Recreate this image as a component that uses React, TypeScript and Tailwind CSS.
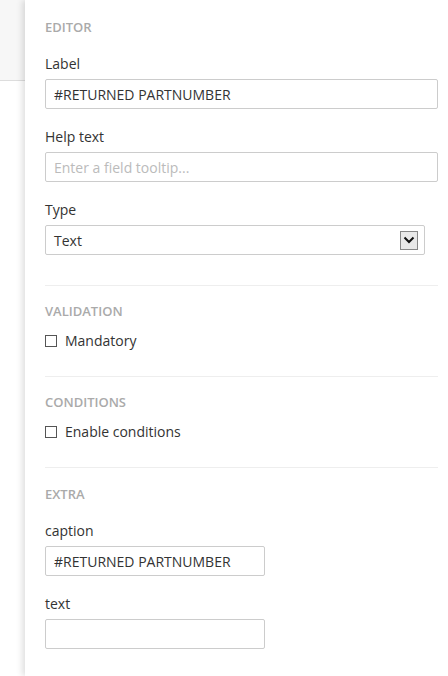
import type { ReactNode } from 'react'

function SectionTitle({ children }: { children: ReactNode }) {
  return <div className="text-[13px] font-semibold uppercase leading-4 text-[#aaaaaa]">{children}</div>
}

function FieldLabel({ children }: { children: ReactNode }) {
  return <div className="mb-[5px] text-[14px] leading-5 text-[#333333]">{children}</div>
}

function TextInput({ value, placeholder, className }: { value?: string; placeholder?: string; className?: string }) {
  return (
    <input
      type="text"
      defaultValue={value}
      placeholder={placeholder}
      className={
        'block h-[30px] rounded-[2px] border border-[#cccccc] bg-white px-[8px] text-[14px] text-[#333333] outline-none placeholder:text-[#bbbbbb] ' +
        (className ?? 'w-full')
      }
    />
  )
}

function Check({ label }: { label: string }) {
  return (
    <label className="flex items-center gap-[8px] text-[14px] leading-5 text-[#333333]">
      <span className="block size-[12px] border border-[#555555] bg-white" />
      {label}
    </label>
  )
}

export default function App() {
  return (
    <div className="flex min-h-[676px] bg-white font-['Open_Sans',sans-serif]">
      <div className="w-[25px] shrink-0">
        <div className="h-[81px] border-b border-[#dddddd] bg-[#f7f7f7]" />
      </div>
      <div className="relative flex-1 bg-white pb-6 pl-[20px] pr-[10px] pt-[19px] shadow-[-3px_0_6px_rgba(0,0,0,0.12)]">
        <SectionTitle>Editor</SectionTitle>
        <div className="mt-[19px]">
          <FieldLabel>Label</FieldLabel>
          <TextInput value="#RETURNED PARTNUMBER" />
        </div>
        <div className="mt-[18px]">
          <FieldLabel>Help text</FieldLabel>
          <TextInput placeholder="Enter a field tooltip..." />
        </div>
        <div className="mt-[18px]">
          <FieldLabel>Type</FieldLabel>
          <div className="flex h-[30px] w-[380px] items-center justify-between rounded-[2px] border border-[#cccccc] bg-white pl-[8px] pr-[6px] text-[14px] text-[#333333]">
            <span>Text</span>
            <span className="flex h-[19px] w-[18px] items-center justify-center border border-[#888888] bg-[#e9e9e9]">
              <svg width="12" height="8" viewBox="0 0 12 8" fill="none">
                <path d="M1.5 1.5 6 6l4.5-4.5" stroke="#111" strokeWidth="2" />
              </svg>
            </span>
          </div>
        </div>

        <div className="mt-[30px] border-t border-[#eeeeee]" />
        <div className="mt-[17px]">
          <SectionTitle>Validation</SectionTitle>
        </div>
        <div className="mt-[12px]">
          <Check label="Mandatory" />
        </div>

        <div className="mt-[25px] border-t border-[#eeeeee]" />
        <div className="mt-[17px]">
          <SectionTitle>Conditions</SectionTitle>
        </div>
        <div className="mt-[12px]">
          <Check label="Enable conditions" />
        </div>

        <div className="mt-[25px] border-t border-[#eeeeee]" />
        <div className="mt-[18px]">
          <SectionTitle>Extra</SectionTitle>
        </div>
        <div className="mt-[19px]">
          <FieldLabel>caption</FieldLabel>
          <TextInput value="#RETURNED PARTNUMBER" className="w-[220px]" />
        </div>
        <div className="mt-[18px]">
          <FieldLabel>text</FieldLabel>
          <TextInput className="w-[220px]" />
        </div>
      </div>
    </div>
  )
}
